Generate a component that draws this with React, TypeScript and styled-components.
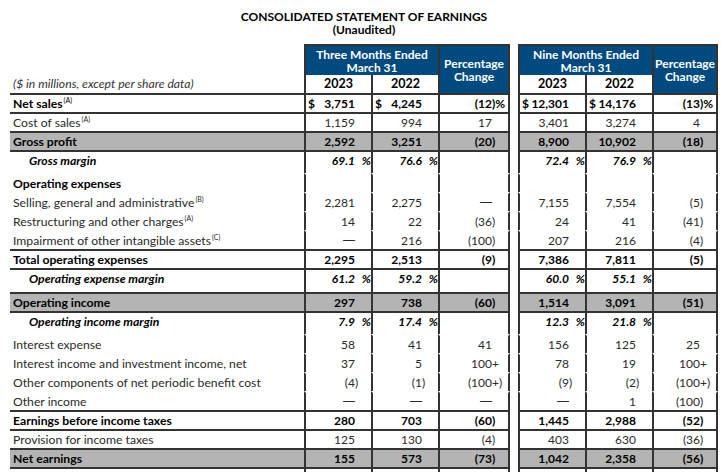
import React from 'react';
import styled, { createGlobalStyle } from 'styled-components';

const LINE = '#333333';
const BLUE = '#004a80';
const SHADE = '#b4b4b4';
const COLS = '294px 67px 67px 72px 8px 67px 67px 66px';

const GlobalStyle = createGlobalStyle`
  html, body { margin: 0; padding: 0; background: #fff; overflow: hidden; }
  body { font-family: Lato, "Liberation Sans", Arial, sans-serif; color: #222; }
`;

const Page = styled.div`
  width: 708px;
  padding: 10px 8px 0 10px;
`;

const TitleBlock = styled.header`
  text-align: center;
  font-size: 12px;
  font-weight: 700;
  line-height: 13px;
  color: #000;
  margin-bottom: 8px;
`;

const HeaderRow = styled.div`
  display: grid;
  grid-template-columns: ${COLS};
`;

const UnitsNote = styled.div`
  align-self: end;
  font-style: italic;
  font-size: 12.2px;
  line-height: 18px;
  padding-left: 3px;
  color: #333;
  white-space: nowrap;
`;

const GroupHead = styled.div<{ $cols: string }>`
  grid-column: span 3;
  display: grid;
  grid-template-columns: ${(p) => p.$cols};
  grid-template-rows: 29px 18px;
  border-top: 2px solid ${LINE};
`;

const PeriodHead = styled.div`
  grid-column: 1 / 3;
  background: ${BLUE};
  color: #fff;
  border-left: 2px solid ${LINE};
  display: flex;
  align-items: center;
  justify-content: center;
  text-align: center;
  font-weight: 700;
  font-size: 12px;
  line-height: 13px;
`;

const PctHead = styled.div`
  grid-column: 3;
  grid-row: 1 / 3;
  background: ${BLUE};
  color: #fff;
  border-left: 2px solid ${LINE};
  border-right: 2px solid ${LINE};
  display: flex;
  align-items: center;
  justify-content: center;
  text-align: center;
  font-weight: 700;
  font-size: 12px;
  line-height: 13px;
`;

const YearHead = styled.div`
  border-left: 2px solid ${LINE};
  text-align: center;
  font-weight: 700;
  font-size: 12.5px;
  line-height: 18px;
  color: #000;
`;

const Row = styled.div<{ $ruled: boolean; $shade: boolean; $bold: boolean; $italic: boolean; $extra: number; $height?: number }>`
  display: grid;
  grid-template-columns: ${COLS};
  font-size: 12.2px;
  line-height: 17px;
  font-weight: ${(p) => (p.$bold ? 700 : 400)};
  font-style: ${(p) => (p.$italic ? 'italic' : 'normal')};
  color: ${(p) => (p.$bold ? '#000' : '#2a2a2a')};
  --rule: ${(p) => (p.$ruled ? LINE : 'transparent')};
  --fill: ${(p) => (p.$shade ? SHADE : 'transparent')};
  --pad: ${(p) => p.$extra}px;
  ${(p) => (p.$height !== undefined ? `height: ${p.$height}px;` : '')}
`;

const LabelCell = styled.div<{ $indent: boolean }>`
  border-top: 2px solid var(--rule);
  background: var(--fill);
  padding: 0 0 var(--pad) ${(p) => (p.$indent ? 19 : 3)}px;
  white-space: nowrap;
`;

const ValueCell = styled.div<{ $last: boolean }>`
  border-top: 2px solid var(--rule);
  background: var(--fill);
  border-left: 2px solid ${LINE};
  ${(p) => (p.$last ? `border-right: 2px solid ${LINE};` : '')}
  display: flex;
  justify-content: flex-end;
  align-items: flex-start;
  padding-bottom: var(--pad);
  white-space: nowrap;
  font-size: 12px;
`;

const Gap = styled.div``;

const Dollar = styled.span`
  margin-right: auto;
  padding-left: 2px;
`;

const Dash = styled.span`
  font-family: "Liberation Sans", Arial, sans-serif;
  font-weight: 400;
`;

const Suffix = styled.span<{ $right: boolean }>`
  flex: none;
  width: 16px;
  text-align: ${(p) => (p.$right ? 'right' : 'left')};
  white-space: pre;
`;

const Note = styled.sup`
  font-size: 7px;
  font-weight: 400;
  font-style: normal;
  line-height: 0;
  vertical-align: 5px;
  margin-left: 1px;
`;

type Kind = 'plain' | 'total' | 'shaded' | 'margin' | 'section';
interface Line {
  label: string;
  note?: string;
  kind: Kind;
  v?: string[];
  extra?: number;
}

const lines: Line[] = [
  { label: 'Net sales', note: 'A', kind: 'total', v: ['$ 3,751', '$ 4,245', '(12)%', '$ 12,301', '$ 14,176', '(13)%'] },
  { label: 'Cost of sales', note: 'A', kind: 'plain', v: ['1,159', '994', '17', '3,401', '3,274', '4'] },
  { label: 'Gross profit', kind: 'shaded', v: ['2,592', '3,251', '(20)', '8,900', '10,902', '(18)'] },
  { label: 'Gross margin', kind: 'margin', extra: 4, v: ['69.1 %', '76.6 %', '', '72.4 %', '76.9 %', ''] },
  { label: 'Operating expenses', kind: 'section' },
  { label: 'Selling, general and administrative', note: 'B', kind: 'plain', v: ['2,281', '2,275', '—', '7,155', '7,554', '(5)'] },
  { label: 'Restructuring and other charges', note: 'A', kind: 'plain', v: ['14', '22', '(36)', '24', '41', '(41)'] },
  { label: 'Impairment of other intangible assets', note: 'C', kind: 'plain', v: ['—', '216', '(100)', '207', '216', '(4)'] },
  { label: 'Total operating expenses', kind: 'total', v: ['2,295', '2,513', '(9)', '7,386', '7,811', '(5)'] },
  { label: 'Operating expense margin', kind: 'margin', extra: 5, v: ['61.2 %', '59.2 %', '', '60.0 %', '55.1 %', ''] },
  { label: 'Operating income', kind: 'shaded', v: ['297', '738', '(60)', '1,514', '3,091', '(51)'] },
  { label: 'Operating income margin', kind: 'margin', extra: 4, v: ['7.9 %', '17.4 %', '', '12.3 %', '21.8 %', ''] },
  { label: 'Interest expense', kind: 'plain', v: ['58', '41', '41', '156', '125', '25'] },
  { label: 'Interest income and investment income, net', kind: 'plain', v: ['37', '5', '100+', '78', '19', '100+'] },
  { label: 'Other components of net periodic benefit cost', kind: 'plain', v: ['(4)', '(1)', '(100+)', '(9)', '(2)', '(100+)'] },
  { label: 'Other income', kind: 'plain', v: ['—', '—', '—', '—', '1', '(100)'] },
  { label: 'Earnings before income taxes', kind: 'total', v: ['280', '703', '(60)', '1,445', '2,988', '(52)'] },
  { label: 'Provision for income taxes', kind: 'plain', v: ['125', '130', '(4)', '403', '630', '(36)'] },
  { label: 'Net earnings', kind: 'shaded', v: ['155', '573', '(73)', '1,042', '2,358', '(56)'] },
];

const isRuledKind = (k?: Kind) => k === 'total' || k === 'shaded';

function Value({ text }: { text: string }) {
  if (!text) return null;
  if (text === '—') {
    return (
      <>
        <Dash>—</Dash>
        <Suffix $right={false} />
      </>
    );
  }
  let rest = text;
  let dollar = false;
  if (rest.startsWith('$ ')) {
    dollar = true;
    rest = rest.slice(2);
  }
  let main = rest;
  let suffix = '';
  let right = false;
  if (rest.endsWith(' %')) {
    main = rest.slice(0, -2);
    suffix = '%';
    right = true;
  } else {
    const m = rest.match(/^(.*\d)(\D*)$/);
    if (m) {
      main = m[1];
      suffix = m[2];
    }
  }
  return (
    <>
      {dollar && <Dollar>$</Dollar>}
      <span>{main}</span>
      <Suffix $right={right}>{suffix}</Suffix>
    </>
  );
}

function DataRow({ line, prev }: { line: Line; prev?: Line }) {
  const ruled = isRuledKind(line.kind) || isRuledKind(prev?.kind);
  const bold = line.kind !== 'plain';
  const values = line.v ?? ['', '', '', '', '', ''];
  return (
    <Row
      $ruled={ruled}
      $shade={line.kind === 'shaded'}
      $bold={bold}
      $italic={line.kind === 'margin'}
      $extra={line.extra ?? 0}
    >
      <LabelCell $indent={line.kind === 'margin'}>
        {line.label}
        {line.note && <Note>({line.note})</Note>}
      </LabelCell>
      {values.slice(0, 3).map((t, i) => (
        <ValueCell key={`a${i}`} $last={i === 2}>
          <Value text={t} />
        </ValueCell>
      ))}
      <Gap />
      {values.slice(3).map((t, i) => (
        <ValueCell key={`b${i}`} $last={i === 2}>
          <Value text={t} />
        </ValueCell>
      ))}
    </Row>
  );
}

function GroupHeader({ cols, period }: { cols: string; period: string[] }) {
  return (
    <GroupHead $cols={cols}>
      <PeriodHead>
        {period[0]}
        <br />
        {period[1]}
      </PeriodHead>
      <PctHead>
        Percentage
        <br />
        Change
      </PctHead>
      <YearHead>2023</YearHead>
      <YearHead>2022</YearHead>
    </GroupHead>
  );
}

export default function App() {
  return (
    <>
      <GlobalStyle />
      <Page>
        <TitleBlock>
          CONSOLIDATED STATEMENT OF EARNINGS
          <br />
          (Unaudited)
        </TitleBlock>
        <HeaderRow>
          <UnitsNote>($ in millions, except per share data)</UnitsNote>
          <GroupHeader cols="67px 67px 72px" period={['Three Months Ended', 'March 31']} />
          <Gap />
          <GroupHeader cols="67px 67px 66px" period={['Nine Months Ended', 'March 31']} />
        </HeaderRow>
        {lines.map((line, i) => (
          <DataRow key={line.label} line={line} prev={lines[i - 1]} />
        ))}
        <Row $ruled $shade={false} $bold={false} $italic={false} $extra={0} $height={12}>
          <LabelCell $indent={false} />
          <ValueCell $last={false} />
          <ValueCell $last={false} />
          <ValueCell $last />
          <Gap />
          <ValueCell $last={false} />
          <ValueCell $last={false} />
          <ValueCell $last />
        </Row>
      </Page>
    </>
  );
}
